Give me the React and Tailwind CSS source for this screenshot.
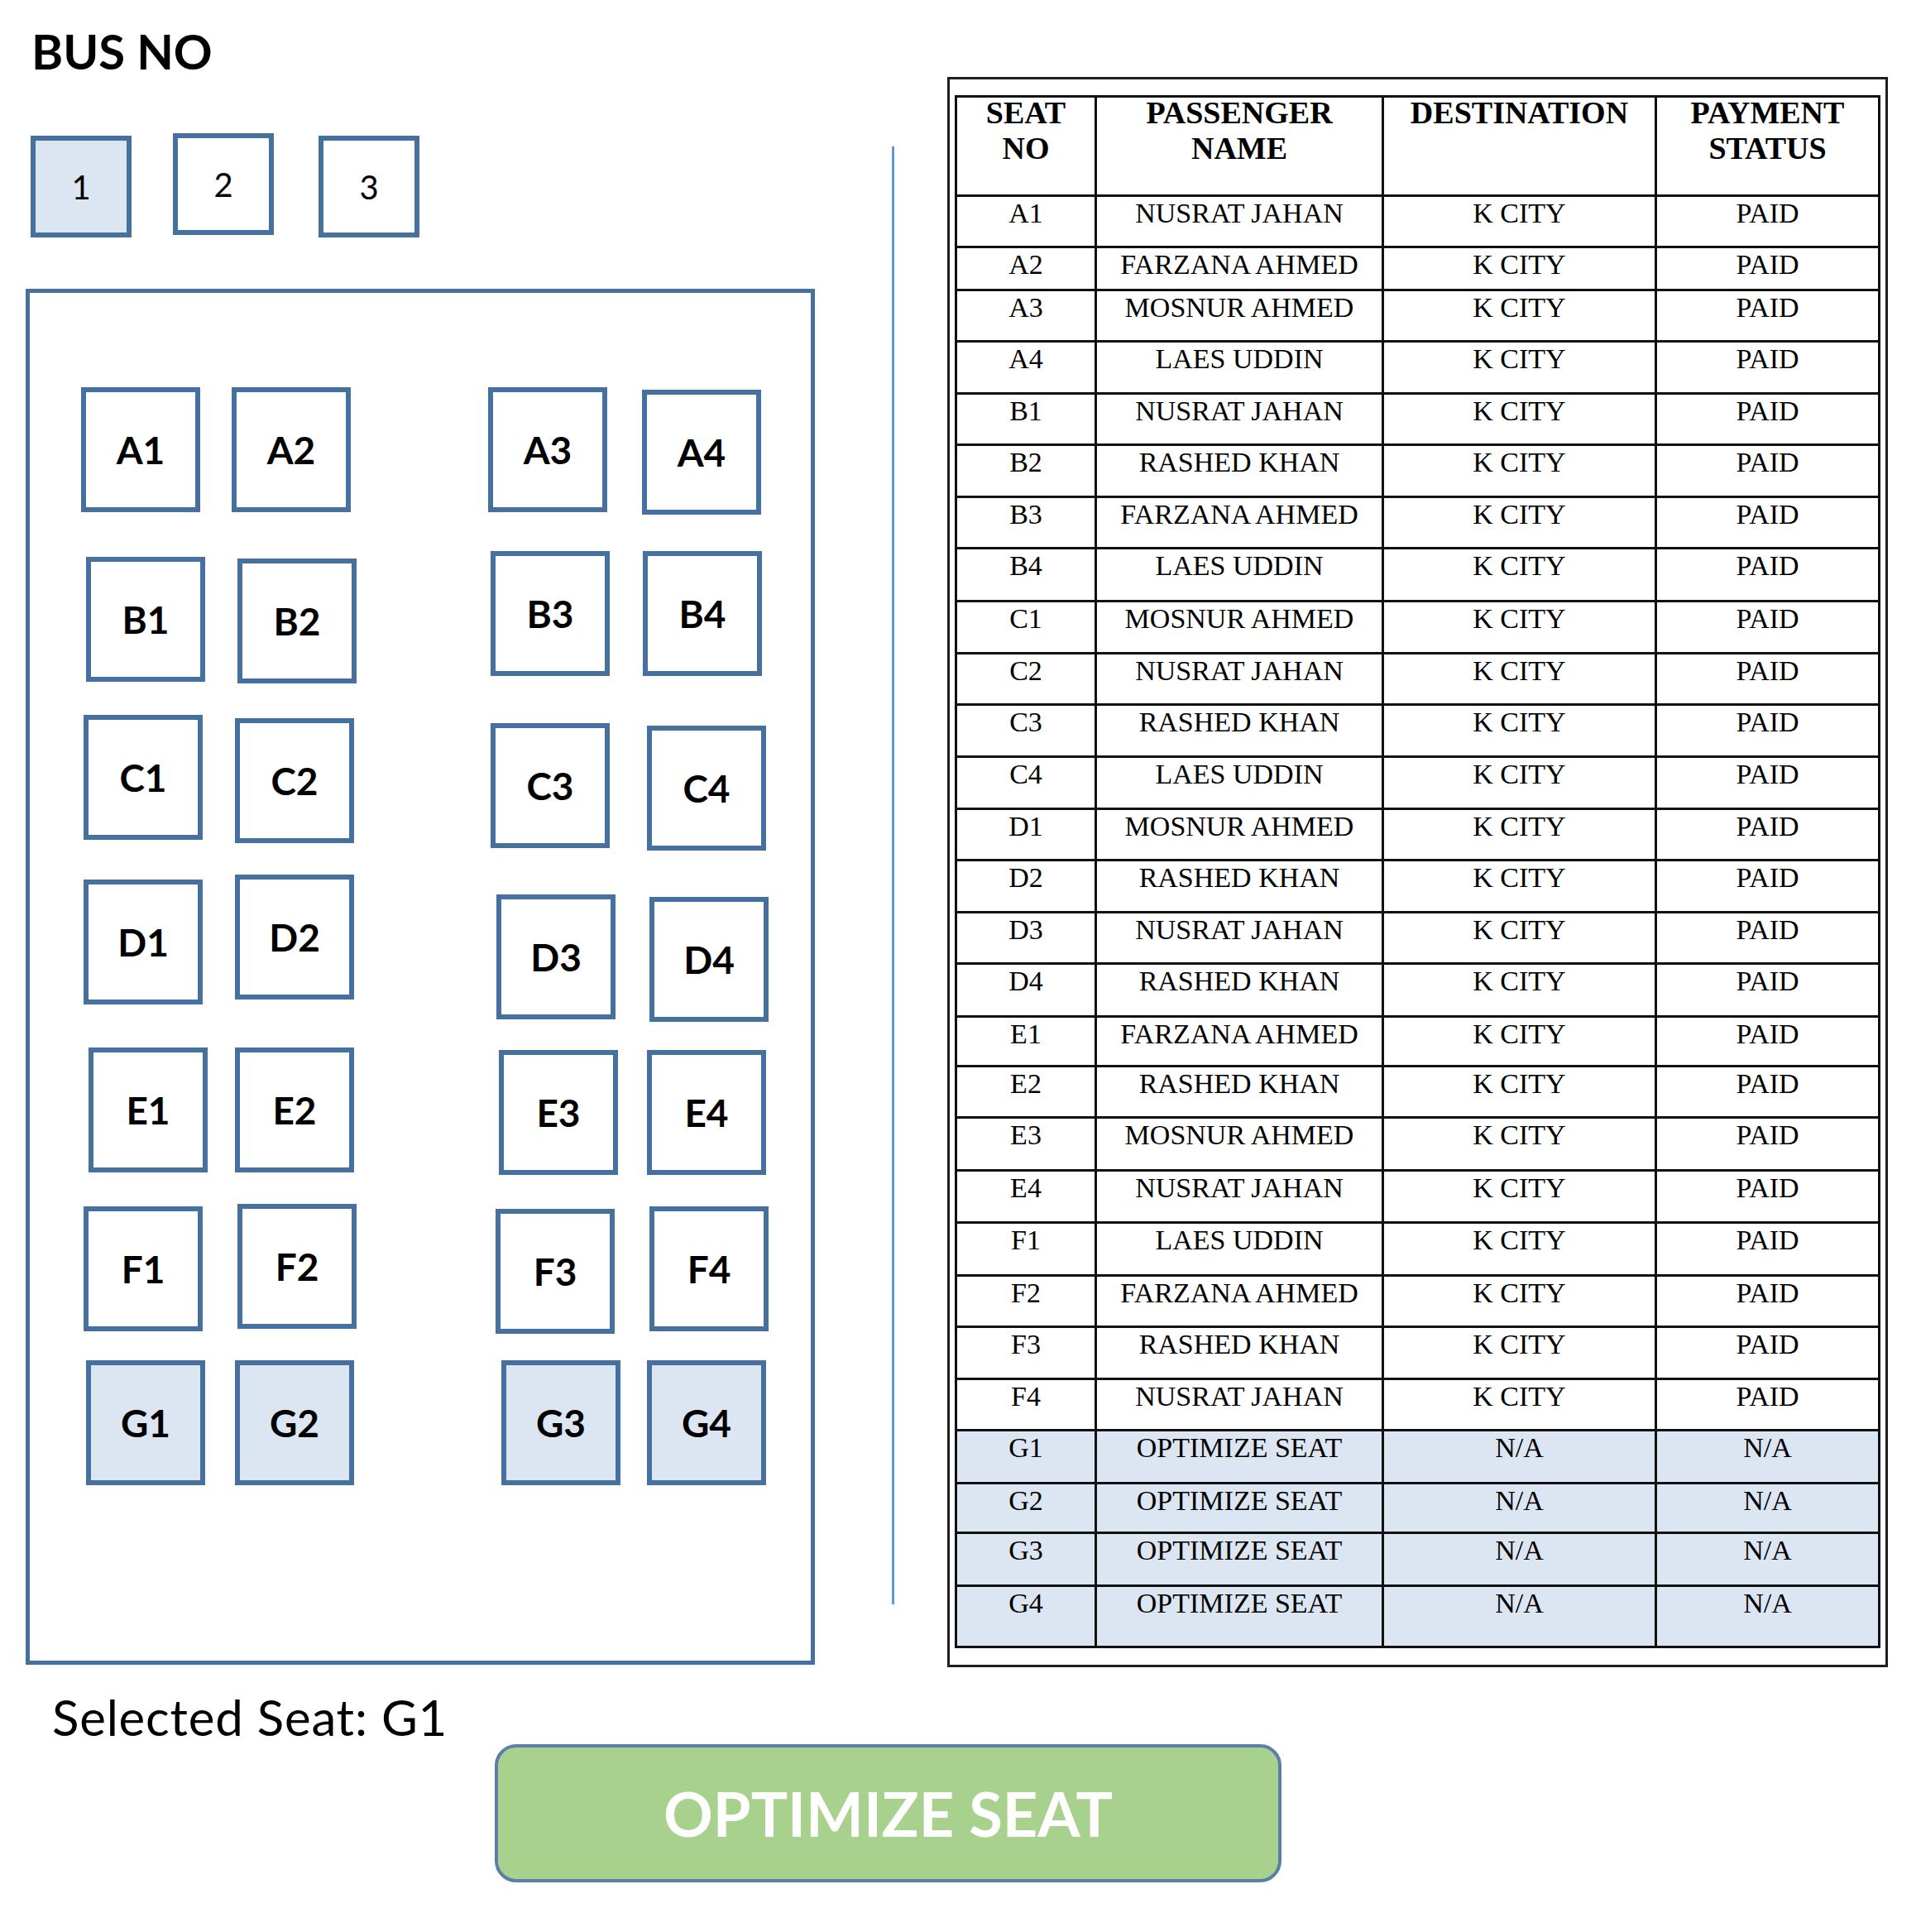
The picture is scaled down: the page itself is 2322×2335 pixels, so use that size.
import React, { useState } from 'react';

const seatRows = [
  {
    h: 'h-[198px]',
    seats: [
      { id: 'A1', cls: 'ml-[62px]' },
      { id: 'A2', cls: 'ml-[38px]' },
      { id: 'A3', cls: 'ml-[166px]' },
      { id: 'A4', cls: 'ml-[42px] mt-[3px]' },
    ],
  },
  {
    h: 'h-[198px]',
    seats: [
      { id: 'B1', cls: 'ml-[68px] mt-[7px]' },
      { id: 'B2', cls: 'ml-[39px] mt-[9px]' },
      { id: 'B3', cls: 'ml-[162px]' },
      { id: 'B4', cls: 'ml-[40px]' },
    ],
  },
  {
    h: 'h-[193px]',
    seats: [
      { id: 'C1', cls: 'ml-[65px]' },
      { id: 'C2', cls: 'ml-[39px] mt-[4px]' },
      { id: 'C3', cls: 'ml-[165px] mt-[10px]' },
      { id: 'C4', cls: 'ml-[45px] mt-[13px]' },
    ],
  },
  {
    h: 'h-[209px]',
    seats: [
      { id: 'D1', cls: 'ml-[65px] mt-[6px]' },
      { id: 'D2', cls: 'ml-[39px]' },
      { id: 'D3', cls: 'ml-[172px] mt-[24px]' },
      { id: 'D4', cls: 'ml-[41px] mt-[27px]' },
    ],
  },
  {
    h: 'h-[189px]',
    seats: [
      { id: 'E1', cls: 'ml-[71px]' },
      { id: 'E2', cls: 'ml-[33px]' },
      { id: 'E3', cls: 'ml-[175px] mt-[3px]' },
      { id: 'E4', cls: 'ml-[35px] mt-[3px]' },
    ],
  },
  {
    h: 'h-[189px]',
    seats: [
      { id: 'F1', cls: 'ml-[65px] mt-[3px]' },
      { id: 'F2', cls: 'ml-[42px]' },
      { id: 'F3', cls: 'ml-[168px] mt-[6px]' },
      { id: 'F4', cls: 'ml-[42px] mt-[3px]' },
    ],
  },
  {
    h: 'h-[160px]',
    seats: [
      { id: 'G1', cls: 'ml-[68px]' },
      { id: 'G2', cls: 'ml-[36px]' },
      { id: 'G3', cls: 'ml-[178px]' },
      { id: 'G4', cls: 'ml-[32px]' },
    ],
  },
];

const passengers = [
  ['A1', 'NUSRAT JAHAN', 'h-[62px]'],
  ['A2', 'FARZANA AHMED', 'h-[52px]'],
  ['A3', 'MOSNUR AHMED', 'h-[62px]'],
  ['A4', 'LAES UDDIN', 'h-[63px]'],
  ['B1', 'NUSRAT JAHAN', 'h-[62px]'],
  ['B2', 'RASHED KHAN', 'h-[63px]'],
  ['B3', 'FARZANA AHMED', 'h-[62px]'],
  ['B4', 'LAES UDDIN', 'h-[64px]'],
  ['C1', 'MOSNUR AHMED', 'h-[63px]'],
  ['C2', 'NUSRAT JAHAN', 'h-[62px]'],
  ['C3', 'RASHED KHAN', 'h-[63px]'],
  ['C4', 'LAES UDDIN', 'h-[63px]'],
  ['D1', 'MOSNUR AHMED', 'h-[62px]'],
  ['D2', 'RASHED KHAN', 'h-[63px]'],
  ['D3', 'NUSRAT JAHAN', 'h-[62px]'],
  ['D4', 'RASHED KHAN', 'h-[64px]'],
  ['E1', 'FARZANA AHMED', 'h-[60px]'],
  ['E2', 'RASHED KHAN', 'h-[62px]'],
  ['E3', 'MOSNUR AHMED', 'h-[64px]'],
  ['E4', 'NUSRAT JAHAN', 'h-[63px]'],
  ['F1', 'LAES UDDIN', 'h-[64px]'],
  ['F2', 'FARZANA AHMED', 'h-[62px]'],
  ['F3', 'RASHED KHAN', 'h-[63px]'],
  ['F4', 'NUSRAT JAHAN', 'h-[62px]'],
];

const optimizeRows = [
  ['G1', 'h-[64px]'],
  ['G2', 'h-[60px]'],
  ['G3', 'h-[64px]'],
  ['G4', 'h-[74px]'],
];

const Seat = ({ id, cls, highlight }) => (
  <div
    className={`${cls} w-[144px] h-[151px] shrink-0 border-[6px] border-[#46719f] flex items-center justify-center font-['Lato',sans-serif] font-bold text-[46px] leading-none text-black ${highlight ? 'bg-[#dce6f2]' : 'bg-white'}`}
  >
    {id}
  </div>
);

const Row = ({ seat, name, dest, status, h, blue }) => (
  <div className={`${h} flex border-t-[3px] border-[#111] ${blue ? 'bg-[#dce6f2]' : 'bg-white'} text-[34px] leading-[38px] text-center`}>
    <div className="w-[166px] pt-[1px]">{seat}</div>
    <div className="w-[347px] pt-[1px] border-l-[3px] border-[#111]">{name}</div>
    <div className="w-[330px] pt-[1px] border-l-[3px] border-[#111]">{dest}</div>
    <div className="w-[270px] pt-[1px] border-l-[3px] border-[#111]">{status}</div>
  </div>
);

export default function App() {
  const [bus, setBus] = useState(1);

  return (
    <div className="w-[2322px] h-[2335px] bg-white text-black overflow-hidden">
      <div className="flex items-start">
        {/* Left: bus selector + seat map */}
        <div className="ml-[31px] w-[954px] shrink-0">
          <h1 className="pl-[7px] mt-[33px] h-[59px] font-['Lato',sans-serif] font-bold text-[58px] leading-none">BUS NO</h1>

          <div className="flex items-start mt-[69px] ml-[6px]">
            {[1, 2, 3].map((n, i) => (
              <button
                key={n}
                onClick={() => setBus(n)}
                className={`w-[122px] h-[123px] border-[6px] border-[#46719f] flex items-center justify-center font-['Lato',sans-serif] text-[40px] leading-none ${bus === n ? 'bg-[#dce6f2]' : 'bg-white'} ${i === 0 ? 'mt-[3px]' : i === 1 ? 'ml-[50px]' : 'ml-[54px] mt-[3px]'}`}
              >
                {n}
              </button>
            ))}
          </div>

          <div className="mt-[62px] w-[954px] h-[1663px] border-[5px] border-[#46719f] pt-[114px]">
            {seatRows.map((row, r) => (
              <div key={r} className={`${row.h} flex items-start`}>
                {row.seats.map((s) => (
                  <Seat key={s.id} id={s.id} cls={s.cls} highlight={s.id[0] === 'G'} />
                ))}
              </div>
            ))}
          </div>
        </div>

        {/* divider */}
        <div className="ml-[93px] mt-[177px] w-[3px] h-[1762px] bg-[#5b9bd5] shrink-0" />

        {/* Passenger table */}
        <div className="ml-[64px] mt-[93px] w-[1137px] shrink-0 border-[3px] border-[#1e1e1e] px-[6px] pt-[19px] pb-[20px]">
          <div className="w-[1119px] border-[3px] border-[#111] font-['Liberation_Serif',serif] text-black">
            <div className="h-[117px] flex font-bold text-[38px] leading-[43px] text-center">
              <div className="w-[166px]"><div className="-mt-[3px]">SEAT<br />NO</div></div>
              <div className="w-[347px] border-l-[3px] border-[#111]"><div className="-mt-[3px]">PASSENGER<br />NAME</div></div>
              <div className="w-[330px] border-l-[3px] border-[#111]"><div className="-mt-[3px]">DESTINATION</div></div>
              <div className="w-[270px] border-l-[3px] border-[#111]"><div className="-mt-[3px]">PAYMENT<br />STATUS</div></div>
            </div>
            {passengers.map(([seat, name, h]) => (
              <Row key={seat} seat={seat} name={name} dest="K CITY" status="PAID" h={h} />
            ))}
            {optimizeRows.map(([seat, h]) => (
              <Row key={seat} seat={seat} name="OPTIMIZE SEAT" dest="N/A" status="N/A" h={h} blue />
            ))}
          </div>
        </div>
      </div>

      {/* Bottom: selection + action */}
      <p className="ml-[63px] mt-[30px] font-['Lato',sans-serif] text-[60px] tracking-[0.8px] leading-none">Selected Seat: G1</p>
      <button className="ml-[598px] mt-[3px] w-[951px] h-[167px] rounded-[26px] border-[4px] border-[#5a7fa8] bg-[#a9d18e] flex items-center justify-center font-['Lato',sans-serif] font-bold text-[74px] leading-none text-white">
        OPTIMIZE SEAT
      </button>
    </div>
  );
}
